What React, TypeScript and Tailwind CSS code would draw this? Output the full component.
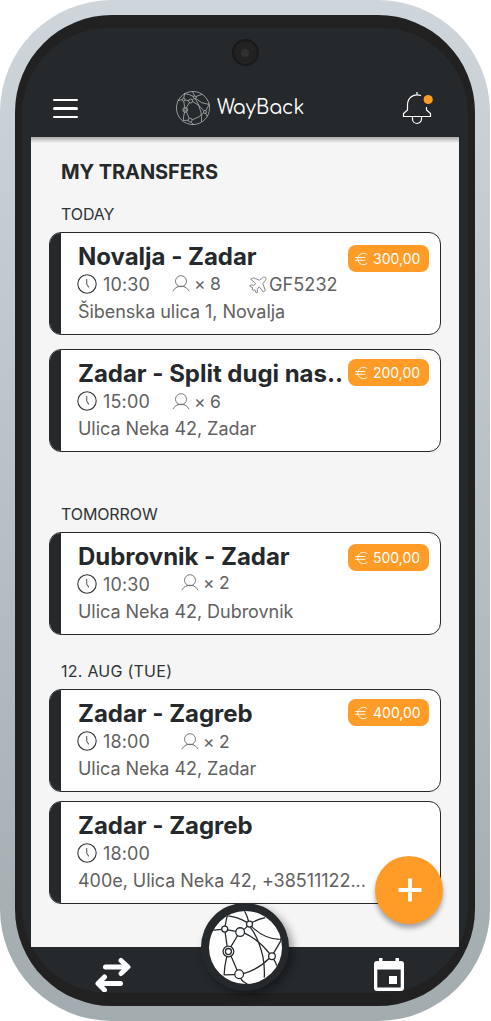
import React from "react";

type Transfer = {
  route: string;
  time: string;
  address: string;
  price?: string;
  priceClass?: string;
  people?: number;
  peopleClass?: string;
  flight?: string;
};

function Network({ className, stroke, outlined }: { className: string; stroke: number; outlined?: boolean }) {
  return (
    <svg viewBox="53 43 224 224" className={className} fill="none" stroke="currentColor" strokeWidth={stroke}>
      {outlined && <circle cx="165" cy="155" r="109" />}
      <path d="M110 61L104 91M64 104L94 101M112 102L136 107M109 60Q142 64 169 80M162 46Q170 60 174 76M185 80Q202 71 224 66M161 101L170 92M104 109L110 150M121 153L141 120M122 181L140 223M109 182Q102 210 101 238M102 237L133 236M151 247Q155 258 171 264M159 233Q207 218 235 188M162 112Q202 130 237 173M183 92Q220 129 267 131M179 94Q203 124 217 182Q223 212 221 245M270 136L249 172M249 190Q257 202 258 209" />
      <circle cx="103" cy="100" r="9" />
      <circle cx="149" cy="109" r="13" />
      <circle cx="177" cy="85" r="9" />
      <circle cx="114" cy="167" r="16" />
      <circle cx="114" cy="167" r="9" />
      <circle cx="146" cy="235" r="13" />
      <circle cx="244" cy="181" r="10" />
      <path d="M273 125A6 6 0 0 0 273 136" />
    </svg>
  );
}

function Clock() {
  return (
    <svg viewBox="0 0 20 20" className="-mt-0.5 size-5 shrink-0" fill="none" stroke="#34383b" strokeWidth="1.1">
      <circle cx="10" cy="10" r="9.2" />
      <path d="M9.7 5v5.2l2.2 3.2" stroke="#5c5f61" />
    </svg>
  );
}

function Person() {
  return (
    <svg viewBox="0 0 18 17" className="h-[17px] w-[18px] shrink-0" fill="none" stroke="#6b6b6b" strokeWidth="0.9">
      <circle cx="9" cy="6.2" r="5.5" />
      <path d="M.8 16.2Q3 12.5 6 11.6M17.2 16.2Q15 12.5 12 11.6M5.5 11.8Q9 10.5 12.500 11.8" />
    </svg>
  );
}

function Plane() {
  return (
    <svg viewBox="0 0 18 18" className="size-[18px] shrink-0" fill="none" stroke="#6b6b6b" strokeWidth="0.8" strokeLinejoin="round">
      <path d="M16.500 1.500C15.300 .6 13.500 1.500 12.400 2.700L10.500 4.200L4.500 1.800L1.800 3.300L6.800 7.500Q5.800 9.300 4.300 9.300L1.500 8.900L.8 10.300L4 12L3 13.300L4.600 14.500L5.800 13.600L7 16.800L8.500 16.200L8.200 13.400Q8.800 11.500 10.500 11L14.300 16L16.300 14.300L13.800 7.500L15.500 5.500C16.800 4.200 17.500 2.400 16.500 1.500Z" />
    </svg>
  );
}

function Euro() {
  return (
    <svg viewBox="0 0 13 14" className="h-3.5 w-[13px] shrink-0" fill="none" stroke="#fff" strokeWidth="0.9">
      <path d="M12.200 2.700A5.700 5.700 0 1 0 12.200 11.300M.2 5.500H10.500M.2 8.300H10.500" />
    </svg>
  );
}

function Card({ t }: { t: Transfer }) {
  return (
    <article className="flex h-[103px] w-[392px] overflow-hidden rounded-xl border border-[#25292c] bg-white">
      <div className="w-[11px] shrink-0 bg-[#25292c]" />
      <div className="relative min-w-0 flex-1 pl-[17px] pt-[9px]">
        <h3 className="h-7 whitespace-nowrap text-[24px] leading-[30px] font-bold tracking-[-0.02px] text-[#25292c]">{t.route}</h3>
        <div className="-ml-px flex h-7 items-center pt-px text-[18px] text-[#616161]">
          <Clock />
          <span className="ml-1.5 w-[69px] leading-[22px] tracking-[0.15px]">{t.time}</span>
          {t.people && (
            <span className={`flex items-center leading-[22px] ${t.peopleClass}`}>
              <Person />
              <span className="ml-[4px] w-[55px] whitespace-pre text-[17.500px] tracking-[-0.2px]">× {t.people}</span>
            </span>
          )}
          {t.flight && (
            <span className="flex items-center">
              <Plane />
              <span className="ml-[2px] tracking-[0.1px]">{t.flight}</span>
            </span>
          )}
        </div>
        <p className="h-7 whitespace-nowrap text-[18px] leading-[27px] tracking-[-0.04px] text-[#616161]">{t.address}</p>
        {t.price && (
          <div className={`absolute right-[11px] flex h-[27px] w-[81px] items-center rounded-lg bg-[#ff9c27] pl-[7px] text-[14px] text-white ${t.priceClass}`}>
            <Euro />
            <span className="ml-[5px]">{t.price}</span>
          </div>
        )}
      </div>
    </article>
  );
}

function Group({ title, className, listClass, cards }: { title: string; className: string; listClass: string; cards: Transfer[] }) {
  return (
    <section className={className}>
      <h2 className="ml-3 h-7 text-[16px] leading-5 text-[#2f3336]">{title}</h2>
      <div className={`flex flex-col ${listClass}`}>
        {cards.map((t, i) => (
          <Card key={i} t={t} />
        ))}
      </div>
    </section>
  );
}

const today: Transfer[] = [
  { route: "Novalja - Zadar", time: "10:30", address: "Šibenska ulica 1, Novalja", price: "300,00", priceClass: "top-3", people: 8, peopleClass: "-mt-0.5", flight: "GF5232" },
  { route: "Zadar - Split dugi nas..", time: "15:00", address: "Ulica Neka 42, Zadar", price: "200,00", priceClass: "top-[9px]", people: 6, peopleClass: "" },
];
const tomorrow: Transfer[] = [
  { route: "Dubrovnik - Zadar", time: "10:30", address: "Ulica Neka 42, Dubrovnik", price: "500,00", priceClass: "top-[11px]", people: 2, peopleClass: "ml-[9px] -mt-1" },
];
const august: Transfer[] = [
  { route: "Zadar - Zagreb", time: "18:00", address: "Ulica Neka 42, Zadar", price: "400,00", priceClass: "top-[9px]", people: 2, peopleClass: "ml-[9px]" },
  { route: "Zadar - Zagreb", time: "18:00", address: "400e, Ulica Neka 42, +38511122..." },
];

export default function App() {
  return (
    <div className="h-[1021px] w-[490px] rounded-[112px] bg-linear-to-b from-[#ced6dc] to-[#a2abae] p-[15px] font-['Inter',sans-serif]">
      <div className="h-[991px] w-[460px] rounded-[97px] bg-[#212121] px-[7px] py-[13px]">
        <div className="flex h-[965px] flex-col rounded-[86px] bg-[#25292c]">
          <header className="h-[109px] shrink-0">
            <div className="flex justify-center pt-[11px]">
              <div className="flex size-[27px] items-center justify-center rounded-full border-2 border-[#17191a] bg-[#222]">
                <div className="size-2 rounded-full bg-[#303030]" />
              </div>
            </div>
            <div className="mt-2.5 flex h-[60px] items-center pt-1">
              <div className="ml-[31px] flex w-[25px] flex-col gap-[6px] pt-px">
                <span className="h-[2.500px] rounded-full bg-white" />
                <span className="h-[2.500px] rounded-full bg-white" />
                <span className="h-[2.500px] rounded-full bg-white" />
              </div>
              <div className="ml-[98px] flex items-center text-white">
                <Network className="size-[34px] text-[#c9cbcc]" stroke={4.5} outlined />
                <span className="ml-[7px] font-['Comfortaa','Lato',sans-serif] text-[19px] leading-6">WayBack</span>
              </div>
              <svg viewBox="0 0 32 34" className="-mt-px ml-auto mr-[35px] h-[34px] w-8" fill="none" stroke="#fff" strokeWidth="1.200">
                <path d="M16 1V4M20 4.500C12 2 6.500 7 6.500 14V19L2.500 22.500V25.500H29.500V22.500L25.500 19V16M11.500 25.500V28A4.500 4.500 0 0 0 20.500 28V25.500" />
                <circle cx="27.200" cy="8.500" r="4.600" fill="#ff9c27" stroke="none" />
              </svg>
            </div>
          </header>
          <main className="mx-[9px] h-[810px] w-[428px] shrink-0 bg-[#f5f5f5]">
            <div className="h-[6px] bg-linear-to-b from-[#a9a9a9] to-[#f5f5f5]" />
            <div className="pl-[18px]">
              <h1 className="ml-3 h-[61px] pt-4 text-[20px] leading-[26px] font-bold tracking-[-0.08px] text-[#25292c]">MY TRANSFERS</h1>
              <Group title="TODAY" className="h-[300px] [&>h2]:tracking-[-0.1px]" listClass="gap-3.5" cards={today} />
              <Group title="TOMORROW" className="h-[157px] [&>h2]:tracking-[-0.1px]" listClass="" cards={tomorrow} />
              <Group title="12. AUG (TUE)" className="h-[243px] [&>h2]:tracking-[0.25px]" listClass="gap-[9px]" cards={august} />
            </div>
          </main>
          <nav className="relative flex h-[46px] shrink-0 justify-between px-[73px]">
            <svg viewBox="0 0 36 36" className="mt-[9px] h-9 w-9" fill="none" stroke="#fff" strokeWidth="5" strokeLinecap="round" strokeLinejoin="round">
              <path d="M10.500 11H31M26 4.500L33 11L26 17.500M25.500 27.500H4M9.500 21L3 27.500L9.500 34" />
            </svg>
            <svg viewBox="0 0 30 33" className="-mr-[9px] mt-[11px] h-[33px] w-[30px]" fill="#fff" fillRule="evenodd">
              <path d="M5 0H8.500V3H21.500V0H25V3H27Q30 3 30 6V30Q30 33 27 33H3Q0 33 0 30V6Q0 3 3 3H5ZM3.300 11.500V29.500H26.700V11.500ZM15 18H23V26H15Z" />
            </svg>
            <div className="absolute -top-[44px] left-[179px] flex size-[88px] items-center justify-center rounded-full bg-[#25292c] shadow-[4px_4px_8px_#00000060]">
              <div className="size-[73px] overflow-hidden rounded-full bg-white">
                <Network className="-m-px size-[75px] text-[#25292c]" stroke={3.8} />
              </div>
            </div>
            <button aria-label="Add transfer" className="absolute -top-[91px] left-[353px] flex size-[68px] items-center justify-center rounded-full bg-[#ff9c27] pl-0.5 shadow-[0_4px_5px_#00000055]">
              <svg viewBox="0 0 24 24" className="size-6" stroke="#fff" strokeWidth="3.800">
                <path d="M12 .5V23.500M.5 12H23.500" />
              </svg>
            </button>
          </nav>
        </div>
      </div>
    </div>
  );
}
